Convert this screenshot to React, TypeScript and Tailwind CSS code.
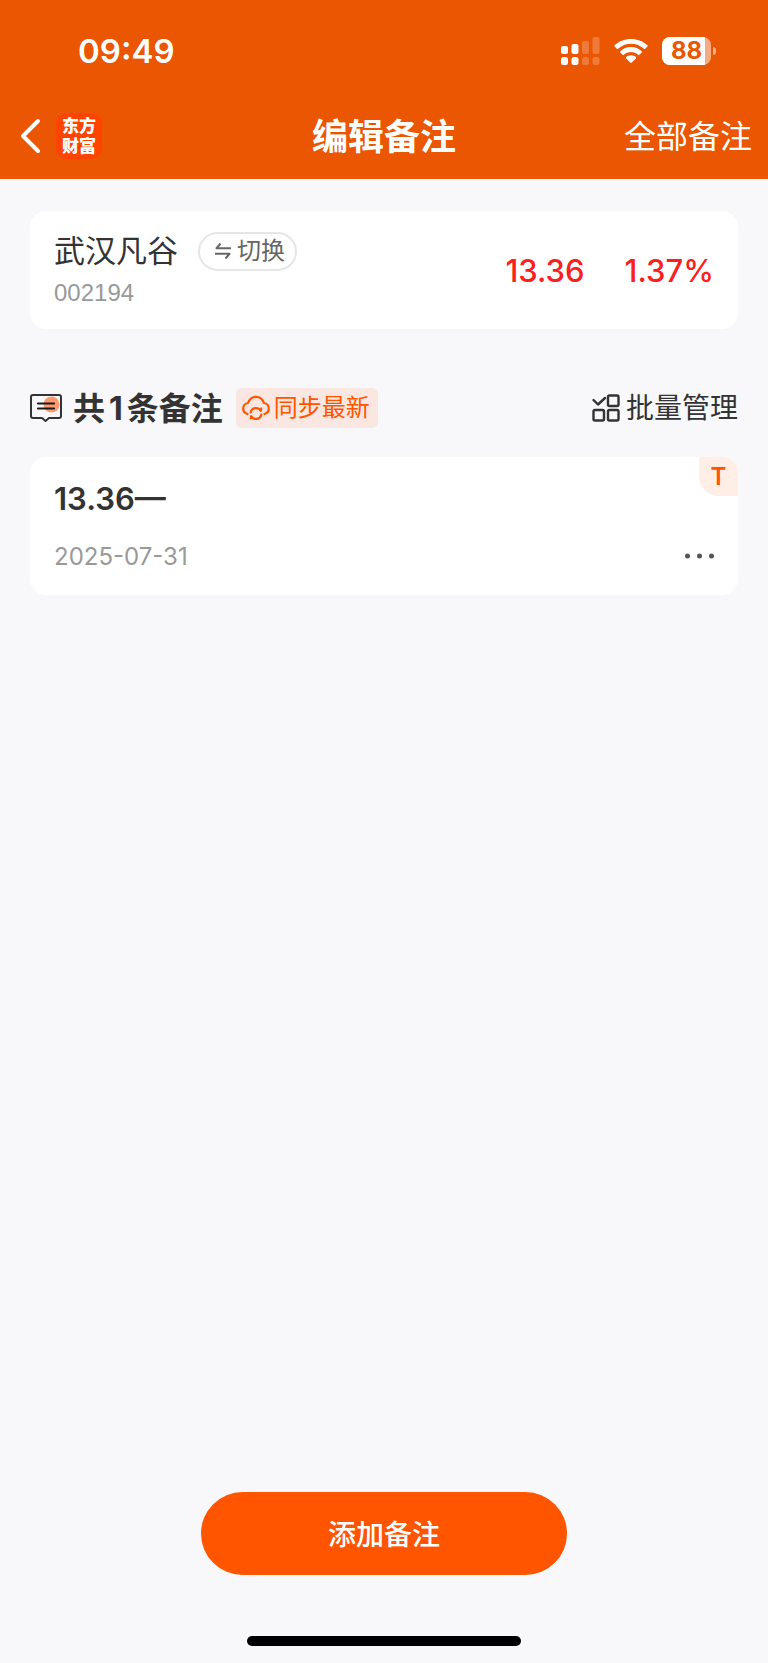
type Note = { id: number; text: string; date: string; tag: string };

const stock = { name: "武汉凡谷", code: "002194", price: "13.36", change: "1.37%" };

const notes: Note[] = [{ id: 1, text: "13.36—", date: "2025-07-31", tag: "T" }];

export default function App() {
  return (
    <div className="flex min-h-screen flex-col bg-[#f8f8fb] text-[#333333] font-['Inter','Noto_Sans_CJK_SC',sans-serif]">
      <header className="bg-[#ea5602] text-white">
        <StatusBar />
        <NavBar />
      </header>

      <main className="flex flex-1 flex-col px-[30px] pt-8">
        <StockCard />

        <div className="mt-[59px] flex h-10 items-center justify-between">
          <div className="flex items-center">
            <NoteIcon />
            <h2 className="ml-[11px] flex items-center gap-1 pt-[2px] text-[32px] leading-10 font-bold">
              <span>共</span>
              <span>{notes.length}</span>
              <span>条备注</span>
            </h2>
            <button className="ml-[13px] flex h-10 items-center gap-1 rounded-md bg-[#fae7e1] pr-2 pl-[6px] text-2xl text-[#ff5500]">
              <CloudSyncIcon />
              同步最新
            </button>
          </div>
          <button className="flex items-center gap-[6px] text-[28px] leading-10">
            <BatchIcon />
            批量管理
          </button>
        </div>

        <ul className="mt-[29px] space-y-4">
          {notes.map((n) => (
            <NoteCard key={n.id} note={n} />
          ))}
        </ul>
      </main>

      <footer className="flex flex-col items-center px-[30px] pb-[17px]">
        <button className="h-[83px] w-[366px] max-w-full rounded-full bg-[#ff5500] pt-[2px] text-[28px] font-medium text-white">
          添加备注
        </button>
        <div className="mt-[61px] h-[10px] w-[274px] rounded-full bg-black" />
      </footer>
    </div>
  );
}

function StatusBar() {
  return (
    <div className="flex h-[92px] items-center justify-between pt-[10px] pr-[52px] pl-[78px]">
      <span className="text-[33px] leading-10 font-semibold">09:49</span>
      <div className="flex items-center">
        <SignalIcon />
        <WifiIcon />
        <Battery level={88} />
      </div>
    </div>
  );
}

function NavBar() {
  return (
    <nav className="grid h-[87px] grid-cols-[1fr_auto_1fr] items-center px-4">
      <div className="flex items-center gap-[14px] pl-1">
        <button aria-label="返回">
          <svg width="22" height="36" viewBox="0 0 22 36" fill="none" stroke="currentColor"
            strokeWidth="4" strokeLinecap="round" strokeLinejoin="round">
            <path d="M18 3 3 18l15 15" />
          </svg>
        </button>
        <span className="flex size-[46px] flex-col items-center justify-center rounded-[10px] bg-[#ff4400] text-[17px] leading-5 font-black">
          <span>东方</span>
          <span>财富</span>
        </span>
      </div>
      <h1 className="pt-[2px] text-4xl font-bold">编辑备注</h1>
      <a href="#all" className="justify-self-end pt-[2px] text-[32px] leading-10">全部备注</a>
    </nav>
  );
}

function StockCard() {
  return (
    <section className="flex h-[118px] items-center justify-between rounded-2xl bg-white px-6">
      <div>
        <div className="flex items-center gap-5">
          <span className="text-[31px] leading-10">{stock.name}</span>
          <button className="flex h-[39px] items-center gap-[5px] rounded-full border-2 border-[#e6e6e6] pr-[10px] pl-[14px] text-2xl leading-8 text-[#666666]">
            <SwapIcon />
            切换
          </button>
        </div>
        <div className="mt-[6px] text-2xl leading-8 text-[#999999] font-['Liberation_Sans',sans-serif]">{stock.code}</div>
      </div>
      <div className="flex gap-10 pt-[2px] text-[31px] leading-10 font-medium text-[#fb2020]">
        <span>{stock.price}</span>
        <span>{stock.change}</span>
      </div>
    </section>
  );
}

function NoteCard({ note }: { note: Note }) {
  return (
    <li className="relative overflow-hidden rounded-2xl bg-white px-6 pt-[22px] pb-[22px]">
      <p className="text-[31px] leading-10 font-semibold">{note.text}</p>
      <div className="mt-[22px] flex items-center justify-between">
        <time className="text-2xl leading-8 text-[#999999]">{note.date}</time>
        <button aria-label="更多">
          <svg width="30" height="8" viewBox="0 0 30 8" fill="#555555">
            <circle cx="3.500" cy="3" r="2.500" />
            <circle cx="15.500" cy="3" r="2.500" />
            <circle cx="27.500" cy="3" r="2.500" />
          </svg>
        </button>
      </div>
      <span className="absolute top-0 right-0 flex size-[39px] items-center justify-center rounded-bl-[20px] bg-[#ffeee6] text-2xl font-semibold text-[#ff5500]">
        {note.tag}
      </span>
    </li>
  );
}

function SignalIcon() {
  return (
    <svg width="39" height="28" viewBox="0 0 39 28" fill="currentColor">
      <rect x="0" y="9" width="7" height="8" rx="2" />
      <rect x="0" y="20" width="7" height="8" rx="2.5" />
      <rect x="10.500" y="7" width="7" height="10" rx="2" />
      <rect x="10.500" y="20" width="7" height="8" rx="2.5" />
      <g opacity="0.22">
        <rect x="21" y="4" width="7" height="13" rx="2" />
        <rect x="21" y="20" width="7" height="8" rx="2.5" />
        <rect x="31.500" y="0" width="7" height="17" rx="2" />
        <rect x="31.500" y="20" width="7" height="8" rx="2.5" />
      </g>
    </svg>
  );
}

function WifiIcon() {
  return (
    <svg className="ml-[14px]" width="34" height="26" viewBox="0 0 34 26" fill="currentColor">
      <path d="M17 1C10.600 1 4.800 3.400.6 7.300c-.4.4-.4.9 0 1.300l2.200 2.200c.4.4.9.4 1.300 0C7.500 7.700 12 5.800 17 5.800s9.500 1.900 12.900 5c.4.4.9.4 1.300 0l2.200-2.200c.4-.4.4-.9 0-1.300C29.200 3.400 23.400 1 17 1Z" />
      <path d="M17 9.100c-4.100 0-7.900 1.600-10.700 4.100-.4.400-.4.900 0 1.300l2.300 2.300c.4.400.9.400 1.300 0 1.900-1.700 4.400-2.700 7.100-2.700s5.200 1 7.100 2.700c.4.400.9.400 1.300 0l2.300-2.300c.4-.4.4-.9 0-1.300C24.900 10.700 21.100 9.100 17 9.100Z" />
      <path d="M17 17.300c-1.900 0-3.600.7-4.900 1.800-.4.400-.4.900 0 1.300l4.200 4.200c.4.400 1 .4 1.400 0l4.200-4.200c.4-.4.4-.9 0-1.300-1.300-1.100-3-1.800-4.900-1.800Z" />
    </svg>
  );
}

function Battery({ level }: { level: number }) {
  return (
    <div className="ml-[14px] flex items-center gap-[2px]">
      <div className="relative h-7 w-[49px] rounded-lg bg-white/50">
        <div className="h-full rounded-l-lg bg-white" style={{ width: `${level}%` }} />
        <span className="absolute inset-0 text-center text-2xl leading-7 font-bold text-[#ea5602]">
          {level}
        </span>
      </div>
      <div className="h-2 w-[3px] rounded-r-full bg-white/50" />
    </div>
  );
}

function SwapIcon() {
  return (
    <svg width="18" height="18" viewBox="0 0 18 18" fill="none" stroke="currentColor"
      strokeWidth="2" strokeLinejoin="round">
      <path d="M17 6.200H2.500L6.500 1.500" />
      <path d="M1 11.800h14.500L11.500 16.500" />
    </svg>
  );
}

function NoteIcon() {
  return (
    <svg width="32" height="30" viewBox="0 0 32 30" fill="none" strokeLinecap="round" strokeLinejoin="round">
      <circle cx="21.500" cy="11.500" r="8" fill="#ff9a70" />
      <path d="M3 2h26a2 2 0 0 1 2 2v19a2 2 0 0 1-2 2H19l-3.500 3L12 25H3a2 2 0 0 1-2-2V4a2 2 0 0 1 2-2Z"
        stroke="#333333" strokeWidth="2" />
      <path d="M8 10.500h16M8 15.500h16" stroke="#1a1a1a" strokeWidth="2.200" />
    </svg>
  );
}

function CloudSyncIcon() {
  return (
    <svg width="28" height="26" viewBox="0 0 28 26" fill="none" stroke="currentColor"
      strokeWidth="2.200" strokeLinecap="round" strokeLinejoin="round">
      <path d="M5.500 19C2.800 18.200 1.200 16 1.200 13.500c0-2.900 2-5.200 4.900-5.500C7.300 4.300 10.300 1.800 14 1.800s6.700 2.500 7.900 6.200c2.900.3 4.900 2.600 4.900 5.500 0 2.500-1.600 4.700-4.300 5.500" />
      <path d="M8.600 17.500a5.500 5.500 0 0 1 10.200-1.600l.4-2.200" />
      <path d="M19.400 19.500a5.500 5.500 0 0 1-10.200 1.600l-.4 2.200" />
    </svg>
  );
}

function BatchIcon() {
  return (
    <svg width="28" height="28" viewBox="0 0 28 28" fill="none" stroke="currentColor"
      strokeWidth="2.400" strokeLinecap="round" strokeLinejoin="round">
      <path d="m1.500 6 4.500 4.500L13 4" />
      <rect x="16" y="1.500" width="10.500" height="10.500" rx="1.500" />
      <rect x="1.500" y="16" width="10.500" height="10.500" rx="1.500" />
      <rect x="16" y="16" width="10.500" height="10.500" rx="1.500" />
    </svg>
  );
}
